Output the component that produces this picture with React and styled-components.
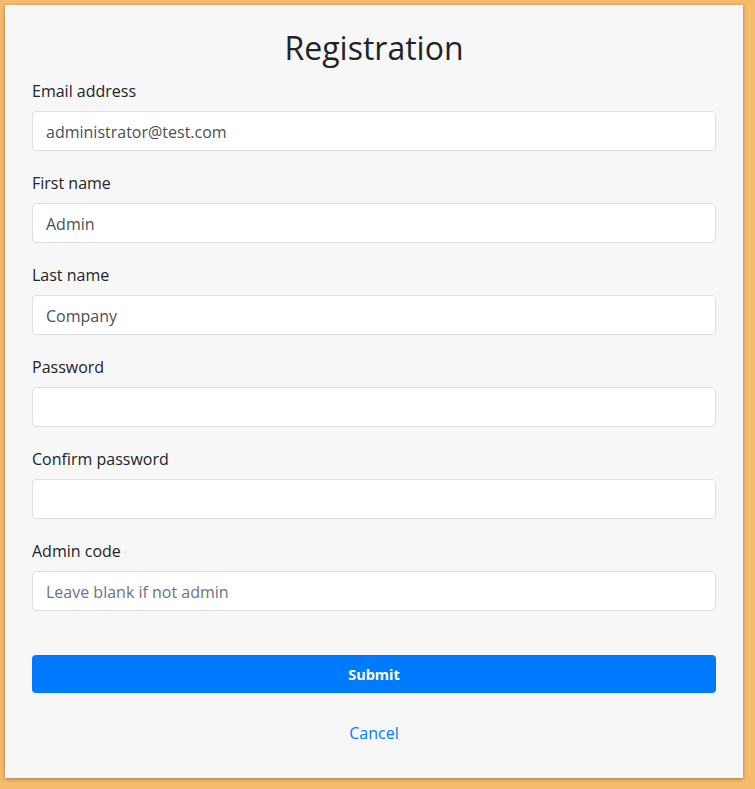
import React from "react";
import styled, { createGlobalStyle } from "styled-components";

const Global = createGlobalStyle`
  html, body { margin: 0; padding: 0; }
  body {
    background: #f6bc6c;
    font-family: "Open Sans", "Noto Sans", sans-serif;
    color: #212529;
    font-size: 16px;
    line-height: 1.5;
  }
  * { box-sizing: border-box; }
`;

const Page = styled.div`
  padding: 5px 12px 12px 5px;
  min-height: 789px;
`;

const Card = styled.form`
  width: 738px;
  background: #f7f7f7;
  box-shadow: 0 1px 4px rgba(0, 0, 0, 0.35);
  padding: 24px 27px 33px;
  display: flex;
  flex-direction: column;
`;

const Title = styled.h2`
  margin: 0 0 12px;
  font-size: 32px;
  font-weight: 400;
  line-height: 1.2;
  text-align: center;
  color: #212529;
`;

const Group = styled.div`
  display: flex;
  flex-direction: column;
  margin-bottom: 20px;
`;

const Label = styled.label`
  display: block;
  margin-bottom: 8px;
  font-size: 16px;
  line-height: 24px;
  color: #212529;
`;

const Input = styled.input`
  display: block;
  width: 100%;
  height: 40px;
  padding: 8px 13px 6px;
  border: 1px solid #dde1e6;
  border-radius: 4px;
  background: #fff;
  font-family: inherit;
  font-size: 16px;
  line-height: 24px;
  color: #495057;
  outline: none;
  &::placeholder { color: #6c757d; opacity: 1; }
`;

const Submit = styled.button`
  margin-top: 24px;
  height: 38px;
  width: 100%;
  border: none;
  border-radius: 4px;
  background: #007bff;
  color: #fff;
  font-family: inherit;
  font-weight: 700;
  font-size: 14.5px;
  cursor: pointer;
`;

const Cancel = styled.a`
  display: block;
  margin-top: 28px;
  text-align: center;
  color: #007bff;
  text-decoration: none;
  line-height: 24px;
`;

const fields = [
  { label: "Email address", value: "administrator@test.com", type: "email" },
  { label: "First name", value: "Admin" },
  { label: "Last name", value: "Company" },
  { label: "Password", value: "", type: "password" },
  { label: "Confirm password", value: "", type: "password" },
  { label: "Admin code", value: "", placeholder: "Leave blank if not admin" },
];

export default function App() {
  return (
    <Page>
      <Global />
      <Card onSubmit={(e) => e.preventDefault()}>
        <Title>Registration</Title>
        {fields.map((f, i) => (
          <Group key={i}>
            <Label htmlFor={`f${i}`}>{f.label}</Label>
            <Input
              id={`f${i}`}
              type={f.type || "text"}
              defaultValue={f.value}
              placeholder={f.placeholder}
            />
          </Group>
        ))}
        <Submit type="submit">Submit</Submit>
        <Cancel href="#">Cancel</Cancel>
      </Card>
    </Page>
  );
}
